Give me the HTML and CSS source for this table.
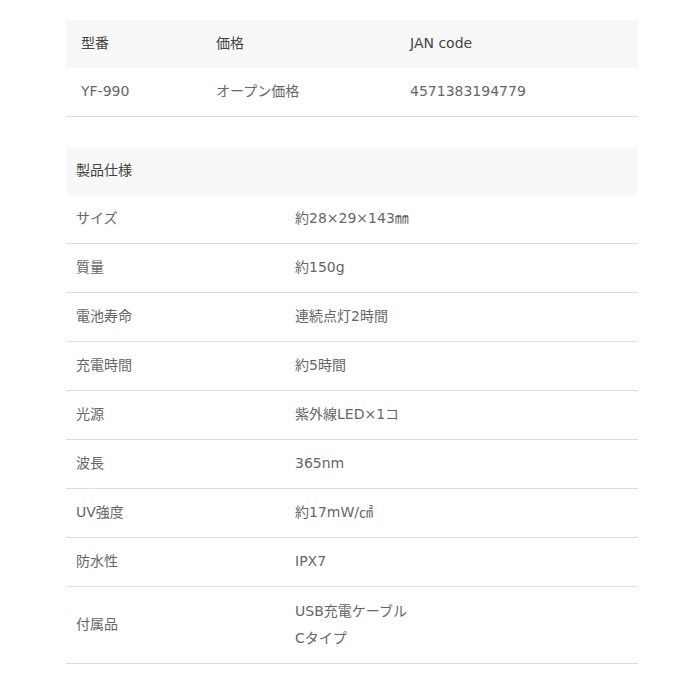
FILE: index.html
```html
<!DOCTYPE html>
<html lang="ja">
<head>
<meta charset="utf-8">
<link rel="stylesheet" href="styles.css">
</head>
<body>
<div class="page">
  <div class="model">
    <div class="row head">
      <div class="c">型番</div>
      <div class="c">価格</div>
      <div class="c">JAN code</div>
    </div>
    <div class="row body">
      <div class="c">YF-990</div>
      <div class="c">オープン価格</div>
      <div class="c">4571383194779</div>
    </div>
  </div>

  <div class="spec">
    <div class="shead">製品仕様</div>
    <div class="srow"><div class="k">サイズ</div><div class="v">約28×29×143㎜</div></div>
    <div class="srow"><div class="k">質量</div><div class="v">約150g</div></div>
    <div class="srow"><div class="k">電池寿命</div><div class="v">連続点灯2時間</div></div>
    <div class="srow"><div class="k">充電時間</div><div class="v">約5時間</div></div>
    <div class="srow"><div class="k">光源</div><div class="v">紫外線LED×1コ</div></div>
    <div class="srow"><div class="k">波長</div><div class="v">365nm</div></div>
    <div class="srow"><div class="k">UV強度</div><div class="v">約17mW/㎠</div></div>
    <div class="srow"><div class="k">防水性</div><div class="v">IPX7</div></div>
    <div class="srow tall"><div class="k">付属品</div><div class="v"><div>USB充電ケーブル</div><div>Cタイプ</div></div></div>
  </div>
</div>
</body>
</html>
```

FILE: styles.css
```css
html, body {
  margin: 0;
  padding: 0;
  background: #fff;
}
body {
  font-family: "DejaVu Sans", "Noto Sans CJK JP", sans-serif;
  font-size: 14px;
  line-height: 20px;
  color: #666;
}
.page {
  width: 572px;
  margin-left: 66px;
  padding-top: 20px;
}
.row {
  display: grid;
  grid-template-columns: 135px 194px 1fr;
  align-items: center;
}
.row .c {
  padding-left: 15px;
  padding-bottom: 3px;
}
.head {
  height: 48px;
  background: #f8f8f8;
  color: #444;
}
.body {
  height: 48px;
  border-bottom: 1px solid #ddd;
}
.spec {
  margin-top: 30px;
}
.shead {
  height: 48px;
  box-sizing: border-box;
  background: #f8f8f8;
  color: #444;
  display: flex;
  align-items: center;
  padding-left: 10px;
  padding-bottom: 3px;
}
.srow {
  display: grid;
  grid-template-columns: 219px 1fr;
  align-items: center;
  height: 48px;
  border-bottom: 1px solid #ddd;
}
.srow .k, .srow .v {
  padding-left: 10px;
  padding-bottom: 3px;
}
.srow.tall {
  height: 76px;
}
.srow.tall .v {
  line-height: 27px;
  padding-bottom: 1px;
}
```
